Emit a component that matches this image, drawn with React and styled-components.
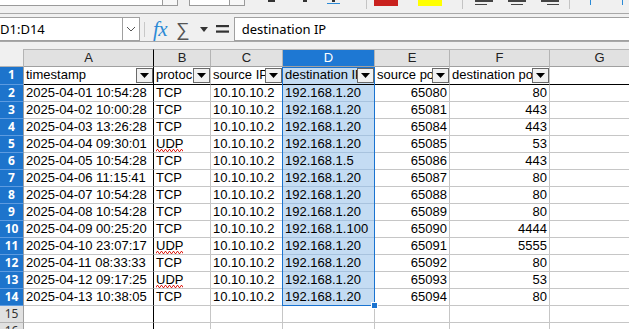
import { Fragment } from 'react';
import styled, { createGlobalStyle } from 'styled-components';

const GlobalStyle = createGlobalStyle`
  html, body { margin: 0; padding: 0; background: #f0f0f0; overflow: hidden; }
  body { font-family: "Noto Sans", "Liberation Sans", sans-serif; }
  * { box-sizing: border-box; }
`;

const Window = styled.div`
  width: 629px;
  height: 329px;
  overflow: hidden;
  background: #f0f0f0;
`;

/* ---------- top toolbar (only its lower edge is visible) ---------- */

const Toolbar = styled.div`
  height: 14px;
  border-bottom: 1px solid #a8a8a8;
  display: flex;
  align-items: flex-start;
  overflow: hidden;
`;

const ToolBox = styled.div`
  margin-left: ${p => p.$ml || 0}px;
  width: ${p => p.$w}px;
  height: 6px;
  background: ${p => p.$bg || '#fff'};
  border: 1px solid #9a9a9a;
  border-top: none;
  border-left: ${p => (p.$noLeft ? 'none' : '1px solid #9a9a9a')};
`;

const ToolMark = styled.div`
  margin-left: ${p => p.$ml || 0}px;
  width: ${p => p.$w}px;
  height: ${p => p.$h || 2}px;
  margin-top: ${p => p.$mt || 0}px;
  background: ${p => p.$c || '#333'};
`;

const ToolSep = styled.div`
  margin-left: ${p => p.$ml || 0}px;
  width: 1px;
  height: 9px;
  background: #c4c4c4;
`;

const AlignIcon = styled.div`
  margin-left: ${p => p.$ml || 0}px;
  width: 18px;
  display: flex;
  flex-direction: column;
  align-items: ${p => p.$align};
  gap: 2px;
  & > span { height: 1.5px; background: #444; display: block; }
  & > span:first-child { width: 18px; }
  & > span:last-child { width: 12px; }
`;

/* ---------- formula bar ---------- */

const FormulaBar = styled.div`
  height: 28px;
  padding-top: 3px;
  border-bottom: 1px solid #a8a8a8;
  display: flex;
  align-items: flex-start;
`;

const NameBox = styled.div`
  width: 122px;
  height: 24px;
  background: #fff;
  border: 1px solid #a0a0a0;
  border-left: none;
  border-right: none;
  font-size: 13px;
  line-height: 22px;
  color: #000;
`;

const NameDrop = styled.div`
  width: 18px;
  height: 24px;
  background: #fff;
  border: 1px solid #a0a0a0;
  display: flex;
  align-items: center;
  justify-content: center;
`;

const BarSep = styled.div`
  margin: 5px 0 0 4px;
  width: 1px;
  height: 15px;
  background: #c8c8c8;
`;

const Fx = styled.div`
  margin-left: 8px;
  font-family: "Liberation Serif", serif;
  font-style: italic;
  font-size: 21px;
  line-height: 24px;
  color: #2b8ad6;
  letter-spacing: -0.5px;
`;

const Sigma = styled.div`
  margin-left: 9px;
  font-family: "DejaVu Sans", sans-serif;
  font-weight: 300;
  font-size: 19px;
  line-height: 24px;
  color: #555;
`;

const IconSlot = styled.div`
  margin-left: ${p => p.$ml}px;
  height: 24px;
  display: flex;
  align-items: center;
`;

const FormulaInput = styled.div`
  margin-left: 5px;
  flex: 1;
  height: 24px;
  background: #fff;
  border: 1px solid #a0a0a0;
  border-right: none;
  font-size: 13px;
  line-height: 22px;
  padding-left: 7px;
  color: #000;
`;

/* ---------- sheet ---------- */

const Spacer = styled.div`
  height: 7px;
`;

const COLS = [130, 57, 72, 92, 75, 100, 100];
const ROW_HDR = 24;

const Sheet = styled.div`
  position: relative;
  display: grid;
  grid-template-columns: ${ROW_HDR}px ${COLS.map(c => c + 'px').join(' ')};
  grid-template-rows: 18px 18px;
  grid-auto-rows: 17px;
  background: #fff;
`;

const Corner = styled.div`
  background: #f0f0f0;
  border-right: 1px solid #b4b4b4;
  border-bottom: 1px solid #b4b4b4;
`;

const ColHead = styled.div`
  background: ${p => (p.$sel ? '#1e78d3' : '#e1e1e1')};
  color: ${p => (p.$sel ? '#fff' : '#222')};
  border-top: 1px solid #b4b4b4;
  border-right: 1px solid ${p => (p.$freeze ? '#000' : '#b4b4b4')};
  border-bottom: 1px solid #a0a0a0;
  font-family: "Liberation Sans", sans-serif;
  font-size: 13px;
  line-height: 16px;
  text-align: center;
`;

const RowHead = styled.div`
  background: ${p => (p.$sel ? '#1d74cc' : '#e1e1e1')};
  color: ${p => (p.$sel ? '#fff' : '#333')};
  border-right: 1px solid #a0a0a0;
  border-bottom: 1px solid ${p => (p.$sel ? '#5d9be0' : '#b4b4b4')};
  font-family: "Noto Sans", sans-serif;
  font-weight: ${p => (p.$sel ? 700 : 400)};
  font-size: 12px;
  line-height: 16px;
  text-align: center;
`;

const Cell = styled.div`
  position: relative;
  background: ${p => (p.$sel ? '#c4dcf3' : '#fff')};
  border-right: 1px solid ${p => (p.$freeze ? '#000' : p.$sel ? '#a8c3de' : '#c6c6c6')};
  border-bottom: 1px solid ${p => (p.$top ? '#000' : p.$sel ? '#a8c3de' : '#c6c6c6')};
  font-family: "Liberation Sans", sans-serif;
  font-size: 13px;
  line-height: 16px;
  color: #000;
  text-align: ${p => p.$align || 'left'};
  padding: 0 2px;
  white-space: nowrap;
  overflow: hidden;
`;

const Misspelt = styled.span`
  display: inline-block;
  position: relative;
  &::after {
    content: '';
    position: absolute;
    left: 0;
    right: 0;
    bottom: 0;
    height: 3px;
    background-image: url("data:image/svg+xml,%3Csvg xmlns='http://www.w3.org/2000/svg' width='4' height='3'%3E%3Cpath d='M0 2.5 L1 0.5 L2 0.5 L3 2.5 L4 2.5' fill='none' stroke='%23e0241b' stroke-width='1'/%3E%3C/svg%3E");
    background-repeat: repeat-x;
  }
`;

const FilterButton = styled.div`
  position: absolute;
  right: 0;
  top: 1px;
  width: 17px;
  height: 15px;
  background: #f1f1f1;
  border: 1px solid #6a6a6a;
  display: flex;
  align-items: center;
  justify-content: center;
`;

const SelectionFrame = styled.div`
  position: absolute;
  pointer-events: none;
  border: 1px solid #1a73d0;
`;

const FillHandle = styled.div`
  position: absolute;
  right: -4px;
  bottom: -4px;
  width: 7px;
  height: 7px;
  background: #1a73d0;
  border: 1px solid #fff;
`;

const header = ['timestamp', 'protoc', 'source IP', 'destination IP', 'source po', 'destination po'];

const rows = [
  ['2025-04-01 10:54:28', 'TCP', '10.10.10.2', '192.168.1.20', 65080, 80],
  ['2025-04-02 10:00:28', 'TCP', '10.10.10.2', '192.168.1.20', 65081, 443],
  ['2025-04-03 13:26:28', 'TCP', '10.10.10.2', '192.168.1.20', 65084, 443],
  ['2025-04-04 09:30:01', 'UDP', '10.10.10.2', '192.168.1.20', 65085, 53],
  ['2025-04-05 10:54:28', 'TCP', '10.10.10.2', '192.168.1.5', 65086, 443],
  ['2025-04-06 11:15:41', 'TCP', '10.10.10.2', '192.168.1.20', 65087, 80],
  ['2025-04-07 10:54:28', 'TCP', '10.10.10.2', '192.168.1.20', 65088, 80],
  ['2025-04-08 10:54:28', 'TCP', '10.10.10.2', '192.168.1.20', 65089, 80],
  ['2025-04-09 00:25:20', 'TCP', '10.10.10.2', '192.168.1.100', 65090, 4444],
  ['2025-04-10 23:07:17', 'UDP', '10.10.10.2', '192.168.1.20', 65091, 5555],
  ['2025-04-11 08:33:33', 'TCP', '10.10.10.2', '192.168.1.20', 65092, 80],
  ['2025-04-12 09:17:25', 'UDP', '10.10.10.2', '192.168.1.20', 65093, 53],
  ['2025-04-13 10:38:05', 'TCP', '10.10.10.2', '192.168.1.20', 65094, 80],
];

const letters = ['A', 'B', 'C', 'D', 'E', 'F', 'G'];
const SEL_COL = 3;

const Triangle = () => (
  <svg width="9" height="5" viewBox="0 0 9 5">
    <path d="M0 0h9L4.5 5z" fill="#000" />
  </svg>
);

const Chevron = () => (
  <svg width="10" height="6" viewBox="0 0 10 6">
    <path d="M1 1l4 4 4-4" fill="none" stroke="#555" strokeWidth="1" />
  </svg>
);

const EqualsIcon = () => (
  <svg width="13" height="10" viewBox="0 0 13 10">
    <rect x="0" y="1" width="13" height="2.2" fill="#333" />
    <rect x="0" y="6.5" width="13" height="2.2" fill="#333" />
  </svg>
);

const frameLeft = ROW_HDR + COLS[0] + COLS[1] + COLS[2] - 1;
const frameTop = 18;
const frameHeight = 18 + 13 * 17;

export default function App() {
  return (
    <Window>
      <GlobalStyle />
      <Toolbar>
        <ToolBox $w={163} $noLeft />
        <ToolBox $w={15} $bg="#f7f7f7" $noLeft />
        <ToolBox $ml={11} $w={41} />
        <ToolBox $w={15} $bg="#f7f7f7" $noLeft />
        <ToolMark $ml={23} $w={7} $h={2} />
        <ToolMark $ml={28} $w={4} $h={2} />
        <ToolMark $ml={25} $w={3} $h={2} />
        <ToolMark $ml={-8} $w={13} $h={1} $mt={3} $c="#2b8ad6" />
        <ToolSep $ml={26} />
        <ToolMark $ml={7} $w={24} $h={6} $c="#c9211e" />
        <ToolMark $ml={20} $w={24} $h={6} $c="#ffff00" />
        <ToolSep $ml={20} />
        <AlignIcon $ml={12} $align="flex-start"><span /><span /></AlignIcon>
        <AlignIcon $ml={15} $align="center"><span /><span /></AlignIcon>
        <AlignIcon $ml={15} $align="flex-end"><span /><span /></AlignIcon>
        <ToolSep $ml={10} />
        <ToolMark $ml={20} $w={1} $h={5} $c="#2b8ad6" />
        <ToolMark $ml={31} $w={1} $h={5} $c="#2b8ad6" />
      </Toolbar>

      <FormulaBar>
        <NameBox>D1:D14</NameBox>
        <NameDrop><Chevron /></NameDrop>
        <BarSep />
        <Fx>fx</Fx>
        <Sigma>∑</Sigma>
        <IconSlot $ml={10}>
          <svg width="8" height="5" viewBox="0 0 8 5"><path d="M0 0h8L4 5z" fill="#333" /></svg>
        </IconSlot>
        <IconSlot $ml={8}><EqualsIcon /></IconSlot>
        <FormulaInput>destination IP</FormulaInput>
      </FormulaBar>

      <Spacer />

      <Sheet>
        <Corner />
        {letters.map((l, i) => (
          <ColHead key={l} $sel={i === SEL_COL} $freeze={i === 0}>{l}</ColHead>
        ))}

        <RowHead $sel>1</RowHead>
        {letters.map((l, i) => (
          <Cell key={l} $top $freeze={i === 0} $sel={i === SEL_COL}>
            {header[i]}
            {header[i] && <FilterButton><Triangle /></FilterButton>}
          </Cell>
        ))}

        {rows.map((r, ri) => (
          <Fragment key={ri}>
            <RowHead $sel>{ri + 2}</RowHead>
            {letters.map((l, i) => {
              const v = r[i];
              return (
                <Cell
                  key={l}
                  $freeze={i === 0}
                  $sel={i === SEL_COL}
                  $align={typeof v === 'number' ? 'right' : 'left'}
                >
                  {v === 'UDP' ? <Misspelt>UDP</Misspelt> : v}
                </Cell>
              );
            })}
          </Fragment>
        ))}

        {[15, 16].map(n => (
          <Fragment key={n}>
            <RowHead>{n}</RowHead>
            {letters.map((l, i) => (
              <Cell key={l} $freeze={i === 0} />
            ))}
          </Fragment>
        ))}

        <SelectionFrame
          style={{ left: frameLeft, top: frameTop, width: COLS[SEL_COL] + 1, height: frameHeight }}
        >
          <FillHandle />
        </SelectionFrame>
      </Sheet>
    </Window>
  );
}
